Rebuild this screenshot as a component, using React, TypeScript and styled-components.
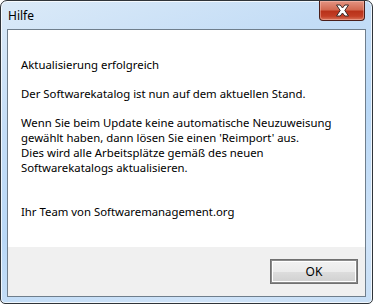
import styled, { createGlobalStyle } from 'styled-components'

const GlobalStyle = createGlobalStyle`
  html, body {
    margin: 0;
    padding: 0;
    background: #ffffff;
  }
  body {
    font-family: "Noto Sans", "Open Sans", Arial, sans-serif;
  }
`

const Frame = styled.div`
  width: 373px;
  height: 304px;
  box-sizing: border-box;
  display: flex;
  flex-direction: column;
  border: 1px solid #2f3439;
  border-radius: 7px 7px 5px 5px;
  background: linear-gradient(160deg, #dbeaf8 0%, #c4ddf6 30%, #b9d8f6 55%, #cfe3f8 85%, #c7def5 100%);
  box-shadow: inset 0 0 0 1px rgba(255, 255, 255, 0.75);
  padding: 0 6px 6px 6px;
  overflow: hidden;
`

const TitleBar = styled.div`
  height: 28px;
  display: flex;
  align-items: flex-start;
  justify-content: space-between;
`

const Title = styled.span`
  font-family: "Noto Sans", "Open Sans", Arial, sans-serif;
  font-size: 12px;
  color: #000000;
  margin-top: 6px;
  margin-left: 1px;
`

const CloseButton = styled.div`
  width: 46px;
  height: 20px;
  margin-right: 1px;
  box-sizing: border-box;
  display: flex;
  align-items: center;
  justify-content: center;
  border: 1px solid #4a1e1a;
  border-top: none;
  border-radius: 0 0 4px 4px;
  background: linear-gradient(180deg, #e39482 0%, #d26a52 45%, #b9321a 55%, #c23e25 80%, #d9735a 100%);
  box-shadow: inset 0 0 0 1px rgba(255, 210, 200, 0.4);
`

const Client = styled.div`
  flex: 1;
  display: flex;
  flex-direction: column;
  border: 1px solid #6f7e8c;
  background: #f0f0f0;
`

const Body = styled.div`
  flex: 1;
  background: #ffffff;
  padding: 27px 13px 0 13px;
  font-family: "Noto Sans", "Open Sans", Arial, sans-serif;
  font-size: 11.35px;
  line-height: 15px;
  color: #000000;
`

const Paragraph = styled.p<{ $gap?: number }>`
  margin: 0 0 ${p => p.$gap ?? 14}px 0;
`

const Footer = styled.div`
  height: 49px;
  box-sizing: border-box;
  display: flex;
  align-items: center;
  justify-content: flex-end;
  padding-right: 7px;
  background: #f0f0f0;
`

const Button = styled.button`
  width: 88px;
  height: 25px;
  box-sizing: border-box;
  border: 1px solid #707070;
  outline: 1px solid #8a8a8a;
  outline-offset: -2px;
  background: linear-gradient(180deg, #f2f2f2 0%, #ebebeb 50%, #dddddd 51%, #cfcfcf 100%);
  box-shadow: inset 0 0 0 2px #ffffff;
  font-family: "Noto Sans", "Open Sans", Arial, sans-serif;
  font-size: 12px;
  color: #000000;
  padding: 0;
`

const CloseIcon = () => (
  <svg width="17" height="13" viewBox="0 0 17 13">
    <path
      d="M2.5 1 L6.2 1 L8.5 4 L10.8 1 L14.5 1 L10.8 6.5 L14.5 12 L10.8 12 L8.5 9 L6.2 12 L2.5 12 L6.2 6.5 Z"
      fill="#ffffff"
      stroke="#3a2a28"
      strokeWidth="1"
      strokeLinejoin="round"
    />
  </svg>
)

export default function App() {
  return (
    <>
      <GlobalStyle />
      <Frame>
        <TitleBar>
          <Title>Hilfe</Title>
          <CloseButton>
            <CloseIcon />
          </CloseButton>
        </TitleBar>
        <Client>
          <Body>
            <Paragraph>Aktualisierung erfolgreich</Paragraph>
            <Paragraph>Der Softwarekatalog ist nun auf dem aktuellen Stand.</Paragraph>
            <Paragraph $gap={29}>
              Wenn Sie beim Update keine automatische Neuzuweisung
              <br />
              gewählt haben, dann lösen Sie einen 'Reimport' aus.
              <br />
              Dies wird alle Arbeitsplätze gemäß des neuen
              <br />
              Softwarekatalogs aktualisieren.
            </Paragraph>
            <Paragraph $gap={0}>Ihr Team von Softwaremanagement.org</Paragraph>
          </Body>
          <Footer>
            <Button>OK</Button>
          </Footer>
        </Client>
      </Frame>
    </>
  )
}
